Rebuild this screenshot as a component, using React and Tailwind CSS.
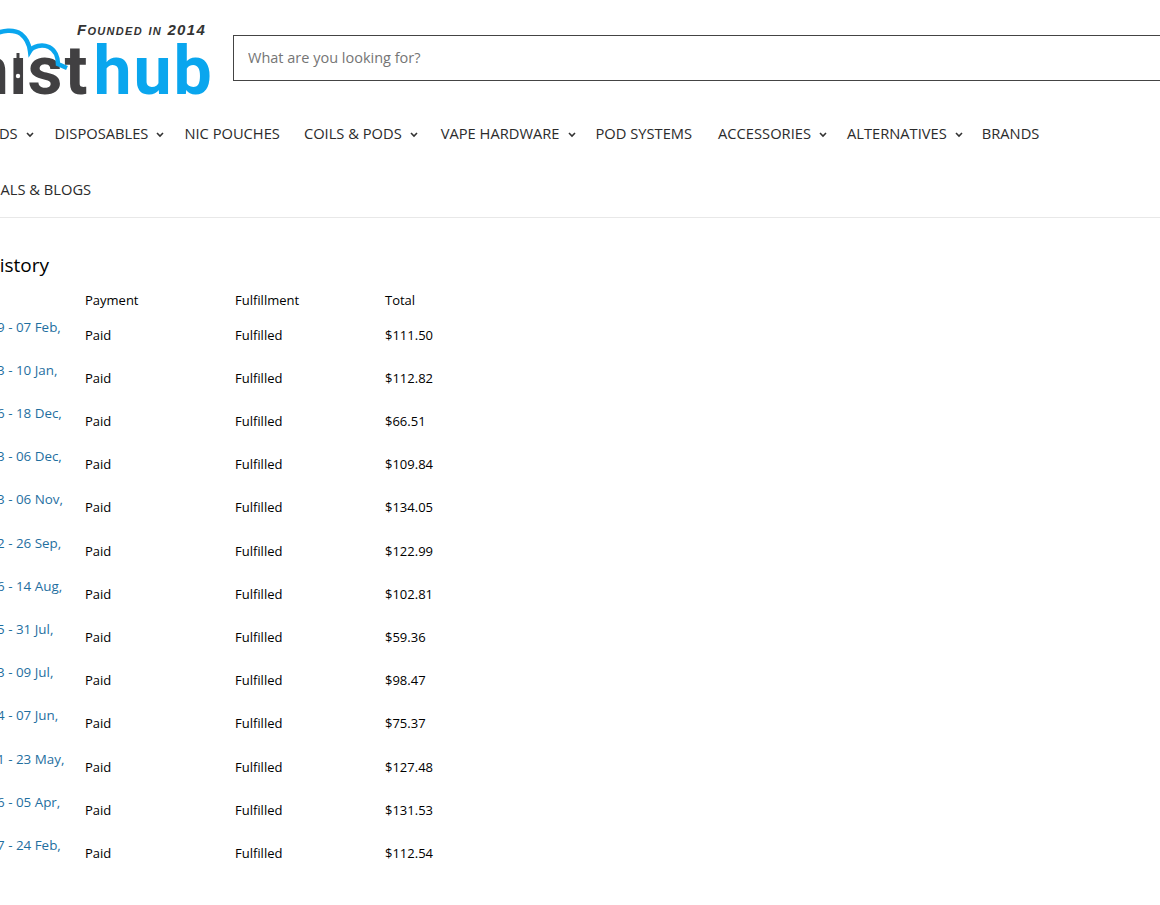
const font = "font-['Open_Sans','Noto_Sans',sans-serif]";

const navRow = [
    { label: "E-LIQUIDS", chevron: true, className: "" },
    { label: "DISPOSABLES", chevron: true, className: "" },
    { label: "NIC POUCHES", className: "-ml-px" },
    { label: "COILS & PODS", chevron: true, className: "" },
    { label: "VAPE HARDWARE", chevron: true, className: "ml-[2px]" },
    { label: "POD SYSTEMS", className: "-ml-px" },
    { label: "ACCESSORIES", chevron: true, className: "ml-[2px]" },
    { label: "ALTERNATIVES", chevron: true, className: "-ml-px" },
    { label: "BRANDS", className: "-ml-[2px]" },
];

const orders = [
    ["9 - 07 Feb,", "$111.50"],
    ["3 - 10 Jan,", "$112.82"],
    ["6 - 18 Dec,", "$66.51"],
    ["3 - 06 Dec,", "$109.84"],
    ["3 - 06 Nov,", "$134.05"],
    ["2 - 26 Sep,", "$122.99"],
    ["6 - 14 Aug,", "$102.81"],
    ["5 - 31 Jul,", "$59.36"],
    ["3 - 09 Jul,", "$98.47"],
    ["4 - 07 Jun,", "$75.37"],
    ["1 - 23 May,", "$127.48"],
    ["6 - 05 Apr,", "$131.53"],
    ["7 - 24 Feb,", "$112.54"],
];

const Chevron = () => (
    <svg width="8" height="6" viewBox="0 0 8 6" fill="none" className="ml-2 -mr-[3px] mt-[3px]">
        <path d="M1 1l3 3 3-3" stroke="#333" strokeWidth="1.6" />
    </svg>
);

const Logo = () => (
    <div className="relative w-[210px] h-[96px] shrink-0 overflow-hidden">
        <span className="absolute left-[-50px] top-[25px] font-['Roboto',sans-serif] text-[68px] leading-[72px] font-bold text-[#414042] whitespace-nowrap">
            mıs<span className="ml-[2px] mr-[6px]">t</span>
            <span className="text-[#0aa6ee] tracking-[2px]">hub</span>
        </span>
        <svg width="210" height="96" viewBox="0 0 210 96" fill="none" className="absolute left-0 top-0">
            <path
                d="M-6 25C2 20 14 19 21 24C26 28 29 33 30 41C33 36 42 34 49 37C55 40 58 47 58 54L67 58"
                stroke="#0aa6ee"
                strokeWidth="4.5"
            />
            <path d="M14 72V49h2.500v-6h3v6H22v23z" fill="#414042" />
            <circle cx="18" cy="66" r="2.200" fill="#fff" />
        </svg>
        <span className="absolute left-[77px] top-[10px] font-['Liberation_Sans',sans-serif] text-[15px] leading-[20px] font-bold italic tracking-[1.300px] [font-variant:small-caps] text-[#333] whitespace-nowrap">
            Founded in 2014
        </span>
    </div>
);

export default function App() {
    return (
        <div className={`w-[1160px] h-[905px] overflow-hidden bg-white text-black ${font}`}>
            <header className="border-b border-[#e8e8e8] h-[218px]">
                <div className="flex items-center h-[105px] pt-[11px]">
                    <Logo />
                    <input
                        placeholder="What are you looking for?"
                        className="ml-[23px] w-[1000px] h-[46px] shrink-0 border border-[#444] px-[14px] pb-[2px] text-[14.5px] outline-none placeholder:text-[#757575]"
                    />
                </div>
                <nav className="text-[14.7px] leading-[20px] text-[#2b2b2b]">
                    <div className="flex h-[56px] items-center ml-[-52px] whitespace-nowrap">
                        {navRow.map((item) => (
                            <a key={item.label} className={`flex items-center mr-6 ${item.className}`}>
                                {item.label}
                                {item.chevron && <Chevron />}
                            </a>
                        ))}
                    </div>
                    <div className="flex h-[56px] items-center ml-[-51px]">
                        <a>TUTORIALS &amp; BLOGS</a>
                    </div>
                </nav>
            </header>
            <main className="pt-[33px]">
                <h2 className="text-[19px] leading-[28px] ml-[-12px]">history</h2>
                <div className="grid grid-cols-[85px_150px_150px_1fr] text-[13px] leading-[18px] mt-[12px] h-[18px]">
                    <span />
                    <span>Payment</span>
                    <span>Fulfillment</span>
                    <span>Total</span>
                </div>
                <div className="mt-[4px]">
                    {orders.map(([date, total]) => (
                        <div key={total} className="grid grid-cols-[85px_150px_150px_1fr] text-[13px] leading-[18px] h-[43.205px] items-center">
                            <a className="text-[#1f6f9f] text-[13.4px] ml-[-3px] -translate-y-2 whitespace-nowrap">{date}</a>
                            <span>Paid</span>
                            <span>Fulfilled</span>
                            <span>{total}</span>
                        </div>
                    ))}
                </div>
            </main>
        </div>
    );
}
